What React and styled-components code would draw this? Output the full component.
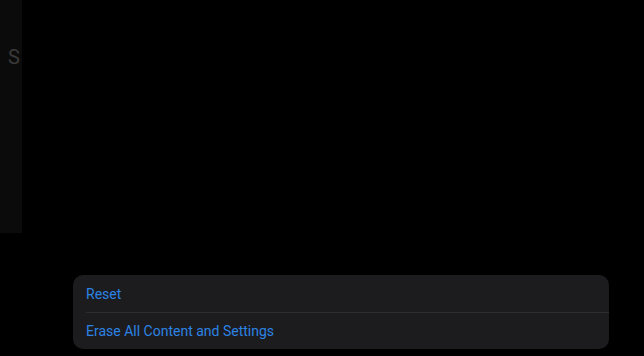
import React from 'react';
import styled, { createGlobalStyle } from 'styled-components';

const Global = createGlobalStyle`
  html, body {
    margin: 0;
    padding: 0;
    background: #000;
  }
  body {
    font-family: Roboto, "Liberation Sans", sans-serif;
  }
`;

const Screen = styled.div`
  width: 644px;
  height: 356px;
  display: flex;
  flex-direction: column;
  overflow: hidden;
  background: #000;
`;

const Top = styled.div`
  height: 275px;
  display: flex;
  align-items: flex-start;
`;

const Sidebar = styled.div`
  width: 22px;
  height: 233px;
  background: #0b0b0b;
  padding: 45px 0 0 8px;
  box-sizing: border-box;
  overflow: hidden;
  > span {
    font-size: 20px;
    color: #3a3a3a;
    line-height: 24px;
  }
`;

const Group = styled.div`
  margin-left: 73px;
  width: 536px;
  background: #1c1c1e;
  border-radius: 10px;
  overflow: hidden;
`;

const Row = styled.div`
  height: 37px;
  display: flex;
  align-items: center;
  margin-left: 13px;
  font-size: 14px;
  color: #2c83e4;
  box-sizing: border-box;
  border-top: ${({ first }) => (first ? 'none' : '1px solid #2e2e30')};
`;

export default function App() {
  return (
    <Screen>
      <Global />
      <Top>
        <Sidebar><span>S</span></Sidebar>
      </Top>
      <Group>
        <Row first>Reset</Row>
        <Row>Erase All Content and Settings</Row>
      </Group>
    </Screen>
  );
}
